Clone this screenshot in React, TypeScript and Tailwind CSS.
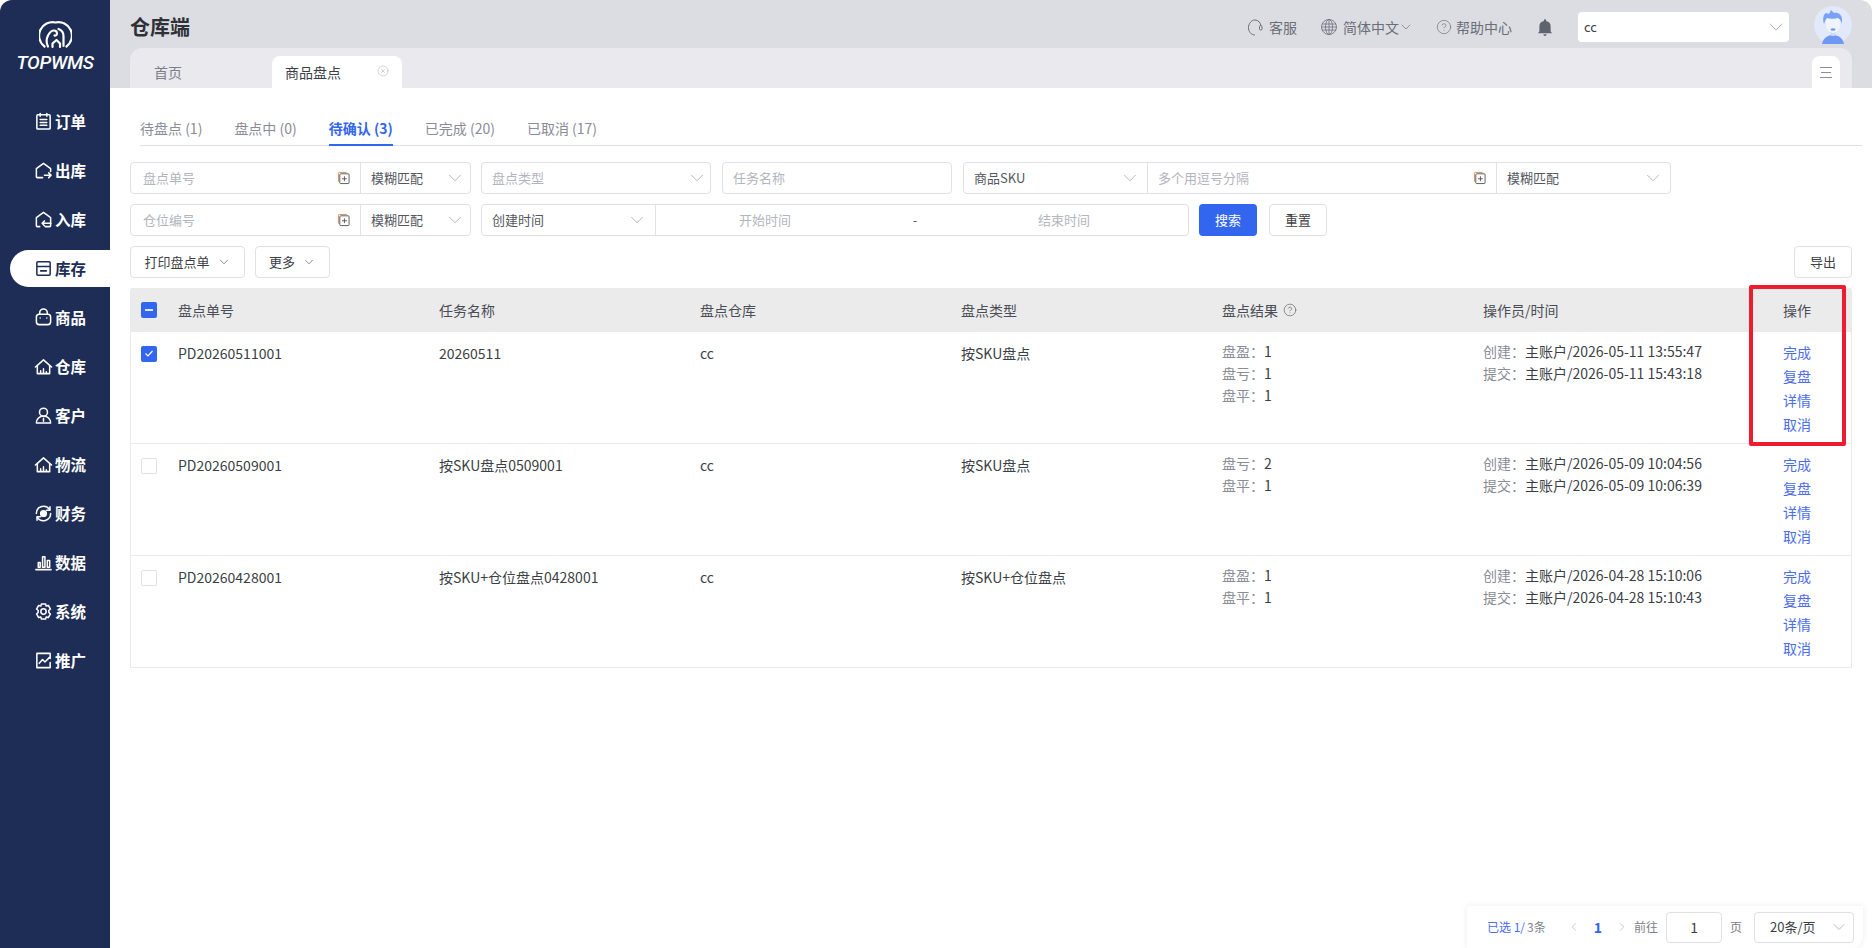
import { ChevronDown, ChevronLeft, ChevronRight, CircleHelp, CircleX } from 'lucide-react';
import type { ReactNode } from 'react';

const icons: Record<string, ReactNode> = {
  order: (
    <>
      <rect x="3" y="3" width="14" height="15" rx="1" />
      <path d="M6.5 1.5v3M13.5 1.5v3M6.5 8h7M6.5 11h7M6.5 14h7" />
    </>
  ),
  outbound: <path d="M9 17.5H3.5a1 1 0 0 1-1-1V8L10 2.5 17.5 8v3M11 15h7M15.5 12.5 18 15l-2.5 2.5" />,
  inbound: <path d="M12 17.5h4.5a1 1 0 0 0 1-1V8L10 2.5 2.5 8v8.5a1 1 0 0 0 1 1H6M18 14H8.5M11 11.5 8.5 14l2.5 2.5" />,
  stock: (
    <>
      <path d="M3 8V4a1 1 0 0 1 1-1h12a1 1 0 0 1 1 1v4zM3 8v8a1 1 0 0 0 1 1h12a1 1 0 0 0 1-1V8" />
      <path d="M7 12.5h6" />
    </>
  ),
  goods: (
    <>
      <rect x="2.5" y="6.5" width="15" height="11" rx="3" />
      <path d="M6 6.5V5a4 4 0 0 1 8 0v1.5M6.5 10.5h.01M13.5 10.5h.01" />
    </>
  ),
  warehouse: <path d="M3.5 17.5V9L10 3l6.5 6v8.5zM1.5 10.5 10 3l8.5 7.5M7 17.5v-3M10 17.5v-5M13 17.5v-2" />,
  customer: (
    <>
      <circle cx="10" cy="6.5" r="4.2" />
      <path d="M2.5 18a7.5 7.5 0 0 1 15 0zM10 13v3" />
    </>
  ),
  finance: (
    <>
      <path d="M17.5 10A7.5 7.5 0 0 1 3.5 13.8M2.5 10A7.5 7.5 0 0 1 16.5 6.2" />
      <path d="M16.8 3v3.5h-3.5M3.2 17v-3.5h3.5" />
      <circle cx="10" cy="10" r="3" fill="currentColor" />
    </>
  ),
  data: <path d="M2 17.5h16M4.5 15v-5h2v5zM9 15V4h2.5v11zM14 15V8h2.5v7z" />,
  system: (
    <>
      <path d="M7.8 2h4.4l.6 2.3 2.3-.7 2.2 3.8-1.700 1.600v2l1.700 1.600-2.200 3.800-2.300-.7-.6 2.300H7.800l-.6-2.300-2.300.7-2.200-3.800 1.700-1.600V9L2.700 7.400l2.200-3.800 2.300.7z" />
      <circle cx="10" cy="10" r="2.8" />
    </>
  ),
  promo: <path d="M17 2.5H3v15h14M17 2.5V8M17 12v5.500M5.500 13 9 9l2.500 2.500L16 7" />,
};

const navItems = [
  { label: '订单', icon: 'order' },
  { label: '出库', icon: 'outbound' },
  { label: '入库', icon: 'inbound' },
  { label: '库存', icon: 'stock', active: true },
  { label: '商品', icon: 'goods' },
  { label: '仓库', icon: 'warehouse' },
  { label: '客户', icon: 'customer' },
  { label: '物流', icon: 'warehouse' },
  { label: '财务', icon: 'finance' },
  { label: '数据', icon: 'data' },
  { label: '系统', icon: 'system' },
  { label: '推广', icon: 'promo' },
];

const tabs = [
  { label: '待盘点 (1)' },
  { label: '盘点中 (0)' },
  { label: '待确认 (3)', active: true },
  { label: '已完成 (20)' },
  { label: '已取消 (17)' },
];

const rows = [
  {
    no: 'PD20260511001',
    name: '20260511',
    type: '按SKU盘点',
    result: [['盘盈', '1'], ['盘亏', '1'], ['盘平', '1']],
    created: '主账户/2026-05-11 13:55:47',
    submitted: '主账户/2026-05-11 15:43:18',
    checked: true,
  },
  {
    no: 'PD20260509001',
    name: '按SKU盘点0509001',
    type: '按SKU盘点',
    result: [['盘亏', '2'], ['盘平', '1']],
    created: '主账户/2026-05-09 10:04:56',
    submitted: '主账户/2026-05-09 10:06:39',
  },
  {
    no: 'PD20260428001',
    name: '按SKU+仓位盘点0428001',
    type: '按SKU+仓位盘点',
    result: [['盘盈', '1'], ['盘平', '1']],
    created: '主账户/2026-04-28 15:10:06',
    submitted: '主账户/2026-04-28 15:10:43',
  },
];

const gridCols = 'grid grid-cols-[35px_repeat(5,261px)_300px_1fr]';

function NavIcon({ name }: { name: string }) {
  return (
    <svg viewBox="0 0 20 20" className="w-[19px] h-[19px] shrink-0" fill="none" stroke="currentColor" strokeWidth="1.6" strokeLinecap="round" strokeLinejoin="round">
      {icons[name]}
    </svg>
  );
}

function Logo() {
  return (
    <svg viewBox="0 0 32 28" className="w-[33px] h-[28px]" fill="none" stroke="white" strokeWidth="2.2" strokeLinecap="round" strokeLinejoin="round">
      <path d="M5 25.5A13.5 13.5 0 0 1 16 1.5a13.5 13.5 0 0 1 11 24" />
      <path d="M8.5 25.5c-2-4-1.500-8 0-11 1.500-3 3.500-5 6-5 2 0 3 1.500 3 3s-1.300 2.500-2.500 2" />
      <path d="M13 26v-3.500l4-3.500 3.500 3.500V26M24 25V15c0-3-2-6-5-7" />
    </svg>
  );
}

function Avatar() {
  return (
    <svg viewBox="0 0 38 38" className="w-[38px] h-[38px] -mt-1">
      <circle cx="19" cy="19" r="19" fill="#e1e9fb" />
      <path d="M8 38c1-6 6-9 11-9s10 3 11 9a19 19 0 0 1-22 0z" fill="#6f98f5" />
      <rect x="16" y="23" width="6" height="7" rx="3" fill="#cfdcf9" />
      <ellipse cx="19" cy="17.5" rx="7.5" ry="9.5" fill="#eef3fe" />
      <path d="M10 18c-2-6 0-10 2-11l3 1 2-4 3 3c4-1 8 2 8 6v5c-1-3-2-5-4-6-3 1-8 1-11 0-2 2-2 4-3 6z" fill="#7ba1f5" />
      <ellipse cx="19" cy="23.5" rx="2.5" ry="1.300" fill="#6f98f5" />
    </svg>
  );
}

function Headset({ className }: { className: string }) {
  return (
    <svg viewBox="0 0 16 17" className={className} fill="none" stroke="currentColor" strokeWidth="1">
      <path d="M8 16C4 16 1.5 12.500 1.500 8.500 1.500 4.500 4.500 1 8 1s5.500 3 5.900 5.500" />
      <rect x="12.500" y="6.500" width="2.500" height="4.500" rx="1.200" />
    </svg>
  );
}

function GlobeIcon({ className }: { className: string }) {
  return (
    <svg viewBox="0 0 16 16" className={className} fill="none" stroke="currentColor" strokeWidth="0.8">
      <circle cx="8" cy="8" r="7.500" />
      <ellipse cx="8" cy="8" rx="3.500" ry="7.500" />
      <path d="M8 .5v15M1 5h14M.5 8h15M1 11h14" />
    </svg>
  );
}

function PasteIcon() {
  return (
    <svg viewBox="0 0 14 14" className="w-[13px] h-[14px] shrink-0" fill="none" strokeWidth="1">
      <path d="M1.5 11V2a1 1 0 0 1 1-1h8" stroke="#c98b4e" />
      <rect x="3" y="2.500" width="10" height="10.500" rx="1" stroke="#555" />
      <path d="M8 5.200v5.200M5.400 7.800h5.200" stroke="#555" />
    </svg>
  );
}

function Chevron({ className = 'w-[22px] h-[22px]' }: { className?: string }) {
  return <ChevronDown className={`shrink-0 text-[#a6a8b0] ${className}`} strokeWidth={0.9} />;
}

function Field({ placeholder }: { placeholder: string }) {
  return <div className="flex-1 flex items-center pl-[10px] text-[#b3b5bd]">{placeholder}</div>;
}

function PasteField({ placeholder, className = '' }: { placeholder: string; className?: string }) {
  return (
    <div className={`flex items-center pr-[10px] text-[#b3b5bd] border-r border-[#dfe0e8] ${className}`}>
      <span className="flex-1">{placeholder}</span>
      <PasteIcon />
    </div>
  );
}

function Picker({ label, placeholder, className = '' }: { label: string; placeholder?: boolean; className?: string }) {
  return (
    <div className={`flex items-center justify-between pl-[10px] ${placeholder ? 'text-[#b3b5bd]' : 'text-[#555861]'} ${className}`}>
      <span>{label}</span>
      <Chevron />
    </div>
  );
}

function Group({ children, className = '' }: { children: ReactNode; className?: string }) {
  return <div className={`flex h-8 rounded border border-[#dfe0e8] bg-white text-[13px] overflow-hidden ${className}`}>{children}</div>;
}

function Button({ children, className = '' }: { children: ReactNode; className?: string }) {
  return (
    <button className={`flex items-center justify-center gap-[7px] h-8 rounded border border-[#dfe0e8] bg-white text-[13px] text-[#3c3f46] ${className}`}>
      {children}
    </button>
  );
}

function Checkbox({ state }: { state?: 'checked' | 'mixed' }) {
  if (state) {
    return (
      <span className="flex items-center justify-center w-4 h-4 rounded-[2px] bg-[#3366ee]">
        {state === 'checked' ? (
          <svg viewBox="0 0 16 16" className="w-4 h-4" fill="none" stroke="white" strokeWidth="1.2">
            <path d="M4.5 7.5 7 10l4.500-5" />
          </svg>
        ) : (
          <span className="w-2 h-[2px] bg-[#dfe6fb]" />
        )}
      </span>
    );
  }
  return <span className="block w-4 h-4 rounded-[2px] border border-[#dfe0e8] bg-white" />;
}

export default function App() {
  return (
    <div className="relative flex w-[1872px] h-[948px] rounded-t-xl overflow-hidden bg-white font-['Noto_Sans_CJK_SC','Noto_Sans',sans-serif] text-[14px] text-[#3c3f46]">
      {/* sidebar */}
      <aside className="w-[110px] shrink-0 bg-[#1e2d55] text-white">
        <div className="flex flex-col items-center pt-[21px] h-[103px]">
          <Logo />
          <span className="mt-[2px] font-['Roboto',sans-serif] font-medium italic text-[19px] leading-[24px] tracking-[-0.3px]">TOPWMS</span>
        </div>
        <nav className="flex flex-col gap-3">
          {navItems.map((item) => (
            <div
              key={item.label}
              className={`flex items-center gap-[2px] h-[37px] ml-[10px] pl-[24px] rounded-l-full font-bold text-[15.5px] ${item.active ? 'bg-white text-[#1e2d55]' : ''}`}
            >
              <NavIcon name={item.icon} />
              <span>{item.label}</span>
            </div>
          ))}
        </nav>
      </aside>

      <div className="flex-1 flex flex-col min-w-0">
        {/* top bar */}
        <header className="flex items-center h-12 pt-[6px] bg-[#dcdde2] pl-5 pr-5">
          <h1 className="flex-1 font-bold text-[20px] text-[#2f3136]">仓库端</h1>
          <div className="flex items-center text-[14px] text-[#6b6e78]">
            <Headset className="w-4 h-[17px] mr-[6px]" />
            <span>客服</span>
            <GlobeIcon className="w-4 h-4 ml-6 mr-[6px]" />
            <span>简体中文</span>
            <ChevronDown className="w-4 h-4 -ml-[1px]" strokeWidth={1} />
            <CircleHelp className="w-4 h-4 ml-[22px] mr-1" strokeWidth={1} />
            <span>帮助中心</span>
            <svg viewBox="0 0 16 16" className="w-[18px] h-[18px] ml-[24px]" fill="#5f636f">
              <path d="M3 12V7.5A5 5 0 0 1 7 2.600V2a1 1 0 0 1 2 0v.6a5 5 0 0 1 4 4.900V12l1 1v.5H2V13zM6.500 14.500h3a1.500 1.500 0 0 1-3 0z" />
            </svg>
            <div className="flex items-center justify-between w-[211px] h-[30px] ml-[24px] pl-[6px] pr-[1px] rounded-sm bg-white text-[13px] text-[#3c3f46]">
              <span>cc</span>
              <Chevron className="w-6 h-6" />
            </div>
            <div className="ml-[25px]">
              <Avatar />
            </div>
          </div>
        </header>

        {/* page tabs */}
        <div className="flex h-10 bg-[#dcdde2] pl-5 pr-5">
          <div className="flex-1 flex items-end pl-[24px] pr-3 rounded-t-xl bg-[#e9e9ee]">
            <span className="w-[118px] h-8 leading-8 text-[#7d808a]">首页</span>
            <div className="flex items-center w-[130px] h-8 pl-[13px] pr-[13px] rounded-t-lg bg-white text-[#3c3f46]">
              <span className="flex-1">商品盘点</span>
              <CircleX className="w-3 h-3 mb-[2px] text-[#a6a8b0]" strokeWidth={1} />
            </div>
            <div className="ml-auto flex items-center justify-center w-7 h-8 rounded-t-lg bg-white">
              <div className="flex flex-col items-center gap-1 w-3">
                <span className="w-full h-px bg-[#8a8c96]" />
                <span className="w-[10px] h-px bg-[#8a8c96]" />
                <span className="w-full h-px bg-[#8a8c96]" />
              </div>
            </div>
          </div>
        </div>

        {/* content */}
        <main className="flex-1 flex flex-col min-h-0 pl-5 pr-5">
          <div className="flex gap-8 h-[34px] mt-[24px] ml-[10px] -mr-[10px] border-b border-[#dfe0e8] text-[14px] text-[#8a8c96]">
            {tabs.map((tab) => (
              <div
                key={tab.label}
                className={`h-[34px] leading-[32px] ${tab.active ? 'border-b-2 border-[#3366ee] font-bold text-[#3366ee]' : ''}`}
              >
                {tab.label}
              </div>
            ))}
          </div>

          <div className="flex gap-[10px] mt-4">
            <Group className="w-[341px]">
              <PasteField placeholder="盘点单号" className="w-[230px] pl-3" />
              <Picker label="模糊匹配" className="flex-1 pr-[4px]" />
            </Group>
            <Group className="w-[230px]">
              <Picker label="盘点类型" placeholder className="flex-1 pr-[2px]" />
            </Group>
            <Group className="w-[230px] ml-[1px]">
              <Field placeholder="任务名称" />
            </Group>
            <Group className="w-[708px] ml-[1px]">
              <Picker label="商品SKU" className="w-[184px] pr-[6px] border-r border-[#dfe0e8]" />
              <PasteField placeholder="多个用逗号分隔" className="w-[349px] pl-[10px]" />
              <Picker label="模糊匹配" className="flex-1 pr-[6px]" />
            </Group>
          </div>

          <div className="flex gap-[10px] mt-[10px]">
            <Group className="w-[341px]">
              <PasteField placeholder="仓位编号" className="w-[230px] pl-3" />
              <Picker label="模糊匹配" className="flex-1 pr-[4px]" />
            </Group>
            <Group className="w-[708px]">
              <Picker label="创建时间" className="w-[174px] pr-[7px] border-r border-[#dfe0e8]" />
              <div className="flex items-center text-center text-[#b3b5bd]">
                <span className="w-[218px]">开始时间</span>
                <span className="w-[82px] text-[#555861]">-</span>
                <span className="w-[216px]">结束时间</span>
              </div>
            </Group>
            <button className="w-[58px] h-8 rounded bg-[#3366ee] text-[13px] text-white">搜索</button>
            <Button className="w-[58px] ml-[2px]">重置</Button>
          </div>

          <div className="flex mt-[10px]">
            <Button className="w-[115px] mr-[10px]">
              打印盘点单
              <ChevronDown className="w-[14px] h-[14px]" strokeWidth={1} />
            </Button>
            <Button className="w-[75px]">
              更多
              <ChevronDown className="w-[14px] h-[14px]" strokeWidth={1} />
            </Button>
            <Button className="w-[58px] ml-auto">导出</Button>
          </div>

          <div className="mt-[10px] border-l border-r border-b border-[#e8e9f2] rounded-t">
            <div className={`${gridCols} h-11 items-center bg-[#ebebeb] text-[#4a4d55]`}>
              <div className="pl-[10px]">
                <Checkbox state="mixed" />
              </div>
              <div className="pl-3">盘点单号</div>
              <div className="pl-3">任务名称</div>
              <div className="pl-3">盘点仓库</div>
              <div className="pl-3">盘点类型</div>
              <div className="flex items-center gap-[5px] pl-3">
                盘点结果
                <CircleHelp className="w-[14px] h-[14px]" strokeWidth={1} />
              </div>
              <div className="pl-3">操作员/时间</div>
              <div className="pl-3">操作</div>
            </div>
            {rows.map((row, i) => (
              <div key={row.no} className={`${gridCols} pt-[10px] leading-[22px] ${i < rows.length - 1 ? 'h-28 border-b border-[#e8e9f2]' : 'h-[111px]'}`}>
                <div className="pl-[10px] pt-1">
                  <Checkbox state={row.checked ? 'checked' : undefined} />
                </div>
                <div className="pl-3">{row.no}</div>
                <div className="pl-3">{row.name}</div>
                <div className="pl-3">cc</div>
                <div className="pl-3">{row.type}</div>
                <div className="pl-3 -mt-[2px]">
                  {row.result.map(([label, value]) => (
                    <div key={label}>
                      <span className="text-[#8a8c96]">{label}：</span>
                      {value}
                    </div>
                  ))}
                </div>
                <div className="pl-3 -mt-[2px]">
                  <div>
                    <span className="text-[#8a8c96]">创建：</span>
                    {row.created}
                  </div>
                  <div>
                    <span className="text-[#8a8c96]">提交：</span>
                    {row.submitted}
                  </div>
                </div>
                <div className="flex flex-col gap-[2px] pl-3 -mt-[1px] text-[#4a6cf0]">
                  <span>完成</span>
                  <span>复盘</span>
                  <span>详情</span>
                  <span>取消</span>
                </div>
              </div>
            ))}
          </div>

          {/* pagination */}
          <div className="mt-auto self-end -mr-[11px] flex items-center w-[396px] h-[42px] pl-[20px] rounded-tl-sm rounded-br-xl bg-white shadow-[0_0_6px_rgba(0,0,0,0.08)] text-[12px] text-[#7d808a]">
            <span className="text-[#4a6cf0]">已选 1/</span>
            <span className="ml-[2px]">3条</span>
            <ChevronLeft className="w-[14px] h-[14px] ml-[21px] text-[#a6a8b0]" strokeWidth={1} />
            <span className="ml-[13px] font-bold text-[14px] text-[#3366ee]">1</span>
            <ChevronRight className="w-[14px] h-[14px] ml-[13px] text-[#a6a8b0]" strokeWidth={1} />
            <span className="ml-[5px]">前往</span>
            <div className="flex items-center justify-center w-[56px] h-[31px] ml-2 rounded border border-[#dfe0e8] text-[14px] text-[#3c3f46]">1</div>
            <span className="ml-2">页</span>
            <div className="flex items-center justify-between w-[100px] h-[31px] ml-[12px] pl-[15px] pr-1 rounded border border-[#dfe0e8] text-[13px] text-[#3c3f46]">
              <span>20条/页</span>
              <Chevron className="w-5 h-5" />
            </div>
          </div>
        </main>
      </div>

      {/* annotation box around the action column */}
      <div className="absolute left-[1749px] top-[285px] w-[97px] h-[161px] border-4 border-[#ee1c2e] rounded-[2px] pointer-events-none" />
    </div>
  );
}
